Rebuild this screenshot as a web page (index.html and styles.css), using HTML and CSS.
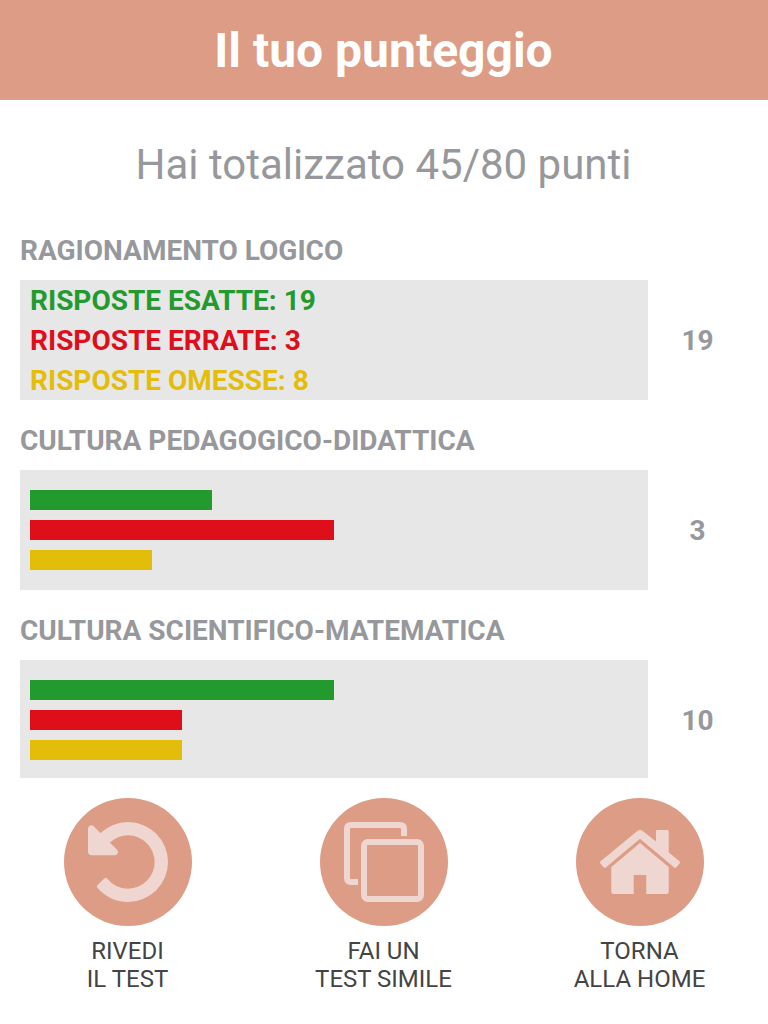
FILE: index.html
```
<!DOCTYPE html>
<html lang="it">
<head>
    <meta charset="UTF-8">
    <meta name="viewport" content="width=device-width, initial-scale=1.0">
    <title>Il tuo punteggio</title>
    <link rel="stylesheet" href="styles.css">
</head>
<body>
    <header class="header">
        <h1>Il tuo punteggio</h1>
    </header>

    <main class="results">
        <p class="total">Hai totalizzato 45/80 punti</p>

        <section class="subject">
            <h2>RAGIONAMENTO LOGICO</h2>
            <div class="row">
                <div class="panel answers">
                    <div class="correct">RISPOSTE ESATTE: 19</div>
                    <div class="wrong">RISPOSTE ERRATE: 3</div>
                    <div class="omitted">RISPOSTE OMESSE: 8</div>
                </div>
                <div class="points">19</div>
            </div>
        </section>

        <section class="subject">
            <h2>CULTURA PEDAGOGICO-DIDATTICA</h2>
            <div class="row">
                <div class="panel chart">
                    <div class="bar bar-correct" style="width: 30%"></div>
                    <div class="bar bar-wrong" style="width: 50%"></div>
                    <div class="bar bar-omitted" style="width: 20%"></div>
                </div>
                <div class="points">3</div>
            </div>
        </section>

        <section class="subject">
            <h2>CULTURA SCIENTIFICO-MATEMATICA</h2>
            <div class="row">
                <div class="panel chart">
                    <div class="bar bar-correct" style="width: 50%"></div>
                    <div class="bar bar-wrong" style="width: 25%"></div>
                    <div class="bar bar-omitted" style="width: 25%"></div>
                </div>
                <div class="points">10</div>
            </div>
        </section>
    </main>

    <nav class="actions">
        <div class="action">
            <div class="circle">
                <svg class="icon" viewBox="0 128 1536 1536">
                    <path fill="currentColor" d="M1536 896q0 156-61 298t-164 245-245 164-298 61q-172 0-327-72.5T177 1387q-7-10-6.5-22.5t8.5-20.5l137-138q10-9 25-9 16 2 23 12 73 95 179 147t225 52q104 0 198.5-40.5T1130 1258t109.5-163.5T1280 896t-40.5-198.5T1130 534 966.5 424.5 768 384q-98 0-188 35.5T420 521l137 138q31 30 14 69-17 40-59 40H64q-26 0-45-19T0 704V256q0-42 40-59 39-17 69 14l130 129q107-101 244.5-156.5T768 128q156 0 298 61t245 164 164 245 61 298z"/>
                </svg>
            </div>
            <span>RIVEDI<br>IL TEST</span>
        </div>
        <div class="action">
            <div class="circle">
                <svg class="icon" viewBox="0 0 80 80" fill="none" stroke="currentColor" stroke-width="6">
                    <path d="M60 14V7Q60 3 56 3H7Q3 3 3 7V56Q3 60 7 60H14"/>
                    <rect x="20" y="20" width="57" height="57" rx="4"/>
                </svg>
            </div>
            <span>FAI UN<br>TEST SIMILE</span>
        </div>
        <div class="action">
            <div class="circle">
                <svg class="icon" viewBox="0 0 80 80" fill="currentColor">
                    <path d="M37.3 9Q40 7 42.7 9L56 19.6V9.3Q56 8 57.3 8H67.4Q68.7 8 68.7 9.3V30.2L79.4 39.2Q80.5 40.2 79.7 41.2L76.4 45.2Q75.4 46.4 74.2 45.4L40 16.7 5.8 45.4Q4.6 46.4 3.6 45.2L.3 41.2Q-.5 40.2.6 39.2Z"/>
                    <path d="M40 21 68.7 45V69.5Q68.7 72 66.2 72H46.3V53H33.7V72H13.8Q11.3 72 11.3 69.5V45Z"/>
                </svg>
            </div>
            <span>TORNA<br>ALLA HOME</span>
        </div>
    </nav>
</body>
</html>
```

FILE: styles.css
```
* {
    box-sizing: border-box;
}
body {
    display: flex;
    flex-direction: column;
    height: 100vh;
    margin: 0;
    font-family: Roboto, sans-serif;
    color: #97989c;
    background-color: white;
    overflow: hidden;
}
.header {
    flex: none;
    height: 100px;
    padding-right: 1px;
    background-color: #dd9c85;
    color: white;
    text-align: center;
}
h1 {
    margin: 0;
    font-size: 48px;
    line-height: 102px;
}
.results {
    flex: 1;
    min-height: 0;
    padding: 0 20px;
    overflow: hidden;
}
.total {
    margin: 0;
    padding-right: 1px;
    font-size: 42px;
    line-height: 130px;
    text-align: center;
}
.subject {
    margin-bottom: 20px;
}
h2 {
    margin: 0 0 8px;
    font-size: 28px;
    line-height: 42px;
}
.row {
    display: flex;
    align-items: center;
}
.panel {
    flex: 1;
    height: 120px;
    padding: 0 10px;
    background-color: #e7e7e7;
}
.answers {
    padding-top: 1px;
    font-size: 28px;
    font-weight: bold;
    line-height: 40px;
}
.correct {
    color: #229a2d;
}
.wrong {
    color: #de0f1b;
}
.omitted {
    color: #e4bd0b;
}
.chart {
    display: flex;
    flex-direction: column;
    justify-content: center;
    gap: 10px;
}
.bar {
    height: 20px;
}
.bar-correct {
    background-color: #229a2d;
}
.bar-wrong {
    background-color: #de0f1b;
}
.bar-omitted {
    background-color: #e4bd0b;
}
.points {
    width: 100px;
    padding-right: 1px;
    font-size: 28px;
    font-weight: bold;
    text-align: center;
}
.actions {
    flex: none;
    display: flex;
    height: 246px;
    padding-top: 20px;
}
.action {
    flex: 1;
    display: flex;
    flex-direction: column;
    align-items: center;
    font-size: 24px;
    line-height: 28px;
    color: #444;
    text-align: center;
}
.action span {
    padding-right: 1px;
}
.circle {
    display: flex;
    align-items: center;
    justify-content: center;
    width: 128px;
    height: 128px;
    margin-bottom: 11px;
    border-radius: 50%;
    background-color: #dd9c85;
    color: #f0d6d0;
}
.icon {
    width: 80px;
    height: 80px;
}
```
